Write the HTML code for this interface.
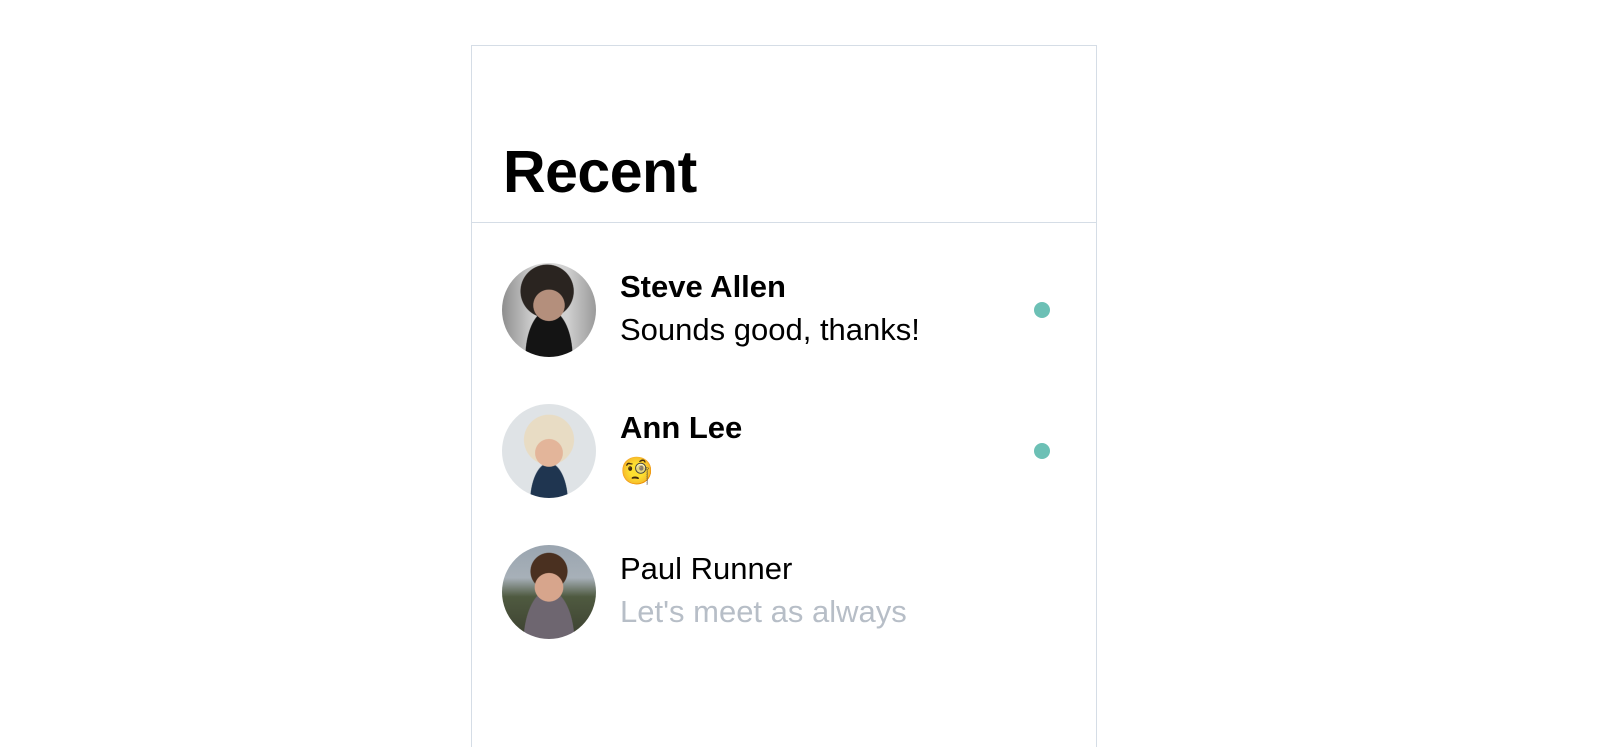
<!DOCTYPE html>
<html><head><style>
html,body{margin:0;height:746px;overflow:hidden;background:#fff;font-family:"Liberation Sans",Arial,sans-serif;}
.box{position:absolute;left:471px;top:45px;width:624px;height:701px;border:1px solid #d5dde6;border-bottom:none;}
h1{position:absolute;left:31px;top:96px;margin:0;font-size:59px;font-weight:bold;color:#000;letter-spacing:-0.5px;line-height:60px;}
.div{position:absolute;left:0;top:176px;width:624px;height:1px;background:#d5dde6;}
.row{position:absolute;left:30px;width:580px;height:94px;}
.av{position:absolute;left:0;top:0;width:94px;height:94px;border-radius:50%;overflow:hidden;}
.nm{position:absolute;left:118px;top:7px;font-size:31px;line-height:34px;color:#000;}
.ms{position:absolute;left:118px;top:50px;font-size:31px;line-height:34px;color:#000;}
.dot{position:absolute;left:532px;top:39px;width:16px;height:16px;border-radius:50%;background:#6cc0b5;}
</style></head><body>
<div class="box">
<h1>Recent</h1>
<div class="div"></div>
<div class="row" style="top:217px">
 <div class="av" style="background:radial-gradient(circle at 50% 45%,#b48f7c 0 22%,transparent 23%),radial-gradient(ellipse at 50% 100%,#141414 0 35%,transparent 36%),radial-gradient(circle at 48% 30%,#2a2420 0 32%,transparent 33%),linear-gradient(90deg,#8e8e8e,#dcdcdc 40%,#cfcfcf 70%,#9a9a9a)"></div>
 <div class="nm"><b>Steve Allen</b></div>
 <div class="ms">Sounds good, thanks!</div>
 <div class="dot"></div>
</div>
<div class="row" style="top:358px">
 <div class="av" style="background:radial-gradient(circle at 50% 52%,#e3b59a 0 20%,transparent 21%),radial-gradient(ellipse at 50% 105%,#1f3550 0 28%,transparent 29%),radial-gradient(circle at 50% 38%,#e8dcc4 0 33%,transparent 34%),#dfe3e6"></div>
 <div class="nm"><b>Ann Lee</b></div>
 <div class="ms" style="font-size:27px">🧐</div>
 <div class="dot"></div>
</div>
<div class="row" style="top:499px">
 <div class="av" style="background:radial-gradient(circle at 50% 45%,#d7a58c 0 20%,transparent 21%),radial-gradient(ellipse at 50% 105%,#6e6670 0 38%,transparent 39%),radial-gradient(circle at 50% 28%,#4a3020 0 22%,transparent 23%),linear-gradient(180deg,#9aa5b0 0,#a7b0b8 35%,#4f5a40 55%,#3c4030)"></div>
 <div class="nm">Paul Runner</div>
 <div class="ms" style="color:#b7bec7">Let's meet as always</div>
</div>
</div>
</body></html>
